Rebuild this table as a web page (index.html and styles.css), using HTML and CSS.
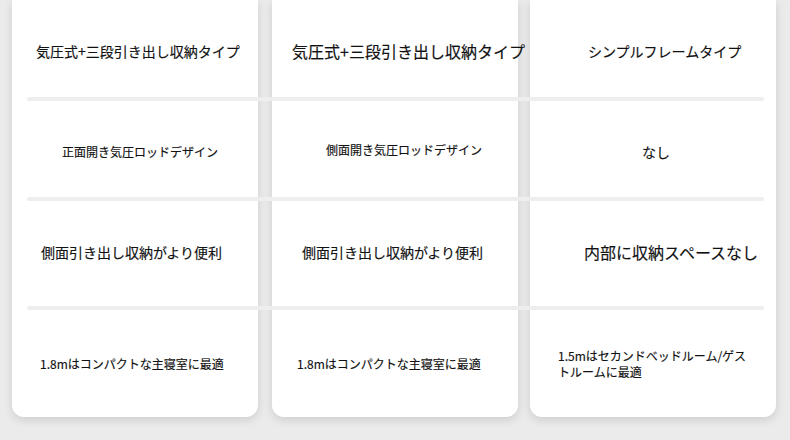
FILE: index.html
```html
<!DOCTYPE html>
<html lang="ja">
<head>
<meta charset="utf-8">
<link rel="stylesheet" href="styles.css">
</head>
<body>
<div class="board">
  <div class="card c1">
    <div class="cell r1"><span class="t14">気圧式+三段引き出し収納タイプ</span></div>
    <div class="rule"></div>
    <div class="cell r2"><span class="t12">正面開き気圧ロッドデザイン</span></div>
    <div class="rule"></div>
    <div class="cell r3"><span class="t14">側面引き出し収納がより便利</span></div>
    <div class="rule"></div>
    <div class="cell r4"><span class="t12">1.8mはコンパクトな主寝室に最適</span></div>
  </div>
  <div class="card c2">
    <div class="cell r1"><span class="t16">気圧式+三段引き出し収納タイプ</span></div>
    <div class="rule"></div>
    <div class="cell r2"><span class="t12">側面開き気圧ロッドデザイン</span></div>
    <div class="rule"></div>
    <div class="cell r3"><span class="t14">側面引き出し収納がより便利</span></div>
    <div class="rule"></div>
    <div class="cell r4"><span class="t12">1.8mはコンパクトな主寝室に最適</span></div>
  </div>
  <div class="card c3">
    <div class="cell r1"><span class="t14">シンプルフレームタイプ</span></div>
    <div class="rule"></div>
    <div class="cell r2"><span class="t14 low">なし</span></div>
    <div class="rule"></div>
    <div class="cell r3"><span class="t16">内部に収納スペースなし</span></div>
    <div class="rule"></div>
    <div class="cell r4"><span class="t12 wrap">1.5mはセカンドベッドルーム/ゲストルームに最適</span></div>
  </div>
</div>
</body>
</html>
```
FILE: styles.css
```css
*, *::before, *::after {
  box-sizing: border-box;
}
html, body {
  margin: 0;
  padding: 0;
}
body {
  width: 790px;
  height: 440px;
  overflow: hidden;
  background: #ebebeb;
  font-family: "Noto Sans CJK JP", "Noto Sans", sans-serif;
  color: #111111;
  -webkit-text-stroke: 0.15px #111111;
}
.board {
  display: grid;
  grid-template-columns: 246px 246px 246px;
  column-gap: 14px;
  padding-left: 12px;
  align-items: start;
  justify-items: start;
}
.card {
  width: 246px;
  background: #ffffff;
  height: 417px;
  border-radius: 0 0 12px 12px;
  box-shadow: 0 3px 10px rgba(0, 0, 0, 0.13);
  display: flex;
  flex-direction: column;
}
.board .c3 { margin-left: -2px; }
.cell {
  display: flex;
  align-items: center;
  white-space: nowrap;
  flex: none;
}
.r1 { height: 97px; }
.r2 { height: 96px; }
.r3 { height: 105px; }
.r4 { height: 107px; }
.rule {
  height: 4px;
  flex: none;
  background: #eeeeee;
  position: relative;
  z-index: 1;
}
.c1 .rule { margin-left: 15px; margin-right: -14px; border-radius: 2px 0 0 2px; }
.c2 .rule { margin-right: -12px; }
.c3 .rule { margin-right: 12px; border-radius: 0 2px 2px 0; }

.t12 { font-size: 12px; line-height: 16px; }
.t14 { font-size: 14px; line-height: 20px; }
.t16 { font-size: 16px; line-height: 22px; }
.low { margin-top: 6px; }
.wrap { white-space: normal; width: 192px; }

.r1 { padding-top: 4px; }

.c1 .r1 { padding-left: 24px; }
.c1 .r2 { padding-left: 50px; padding-top: 6px; }
.c1 .r3 { padding-left: 29px; padding-bottom: 4px; }
.c1 .r4 { padding-left: 28px; }

.c2 .r1 { padding-left: 20px; }
.c2 .r2 { padding-left: 54px; padding-top: 2px; }
.c2 .r3 { padding-left: 30px; padding-bottom: 4px; }
.c2 .r4 { padding-left: 25px; }

.c3 .r1 { padding-left: 58px; }
.c3 .r2 { padding-left: 112px; }
.c3 .r3 { padding-left: 54px; padding-bottom: 4px; }
.c3 .r4 { padding-left: 28px; }
```
